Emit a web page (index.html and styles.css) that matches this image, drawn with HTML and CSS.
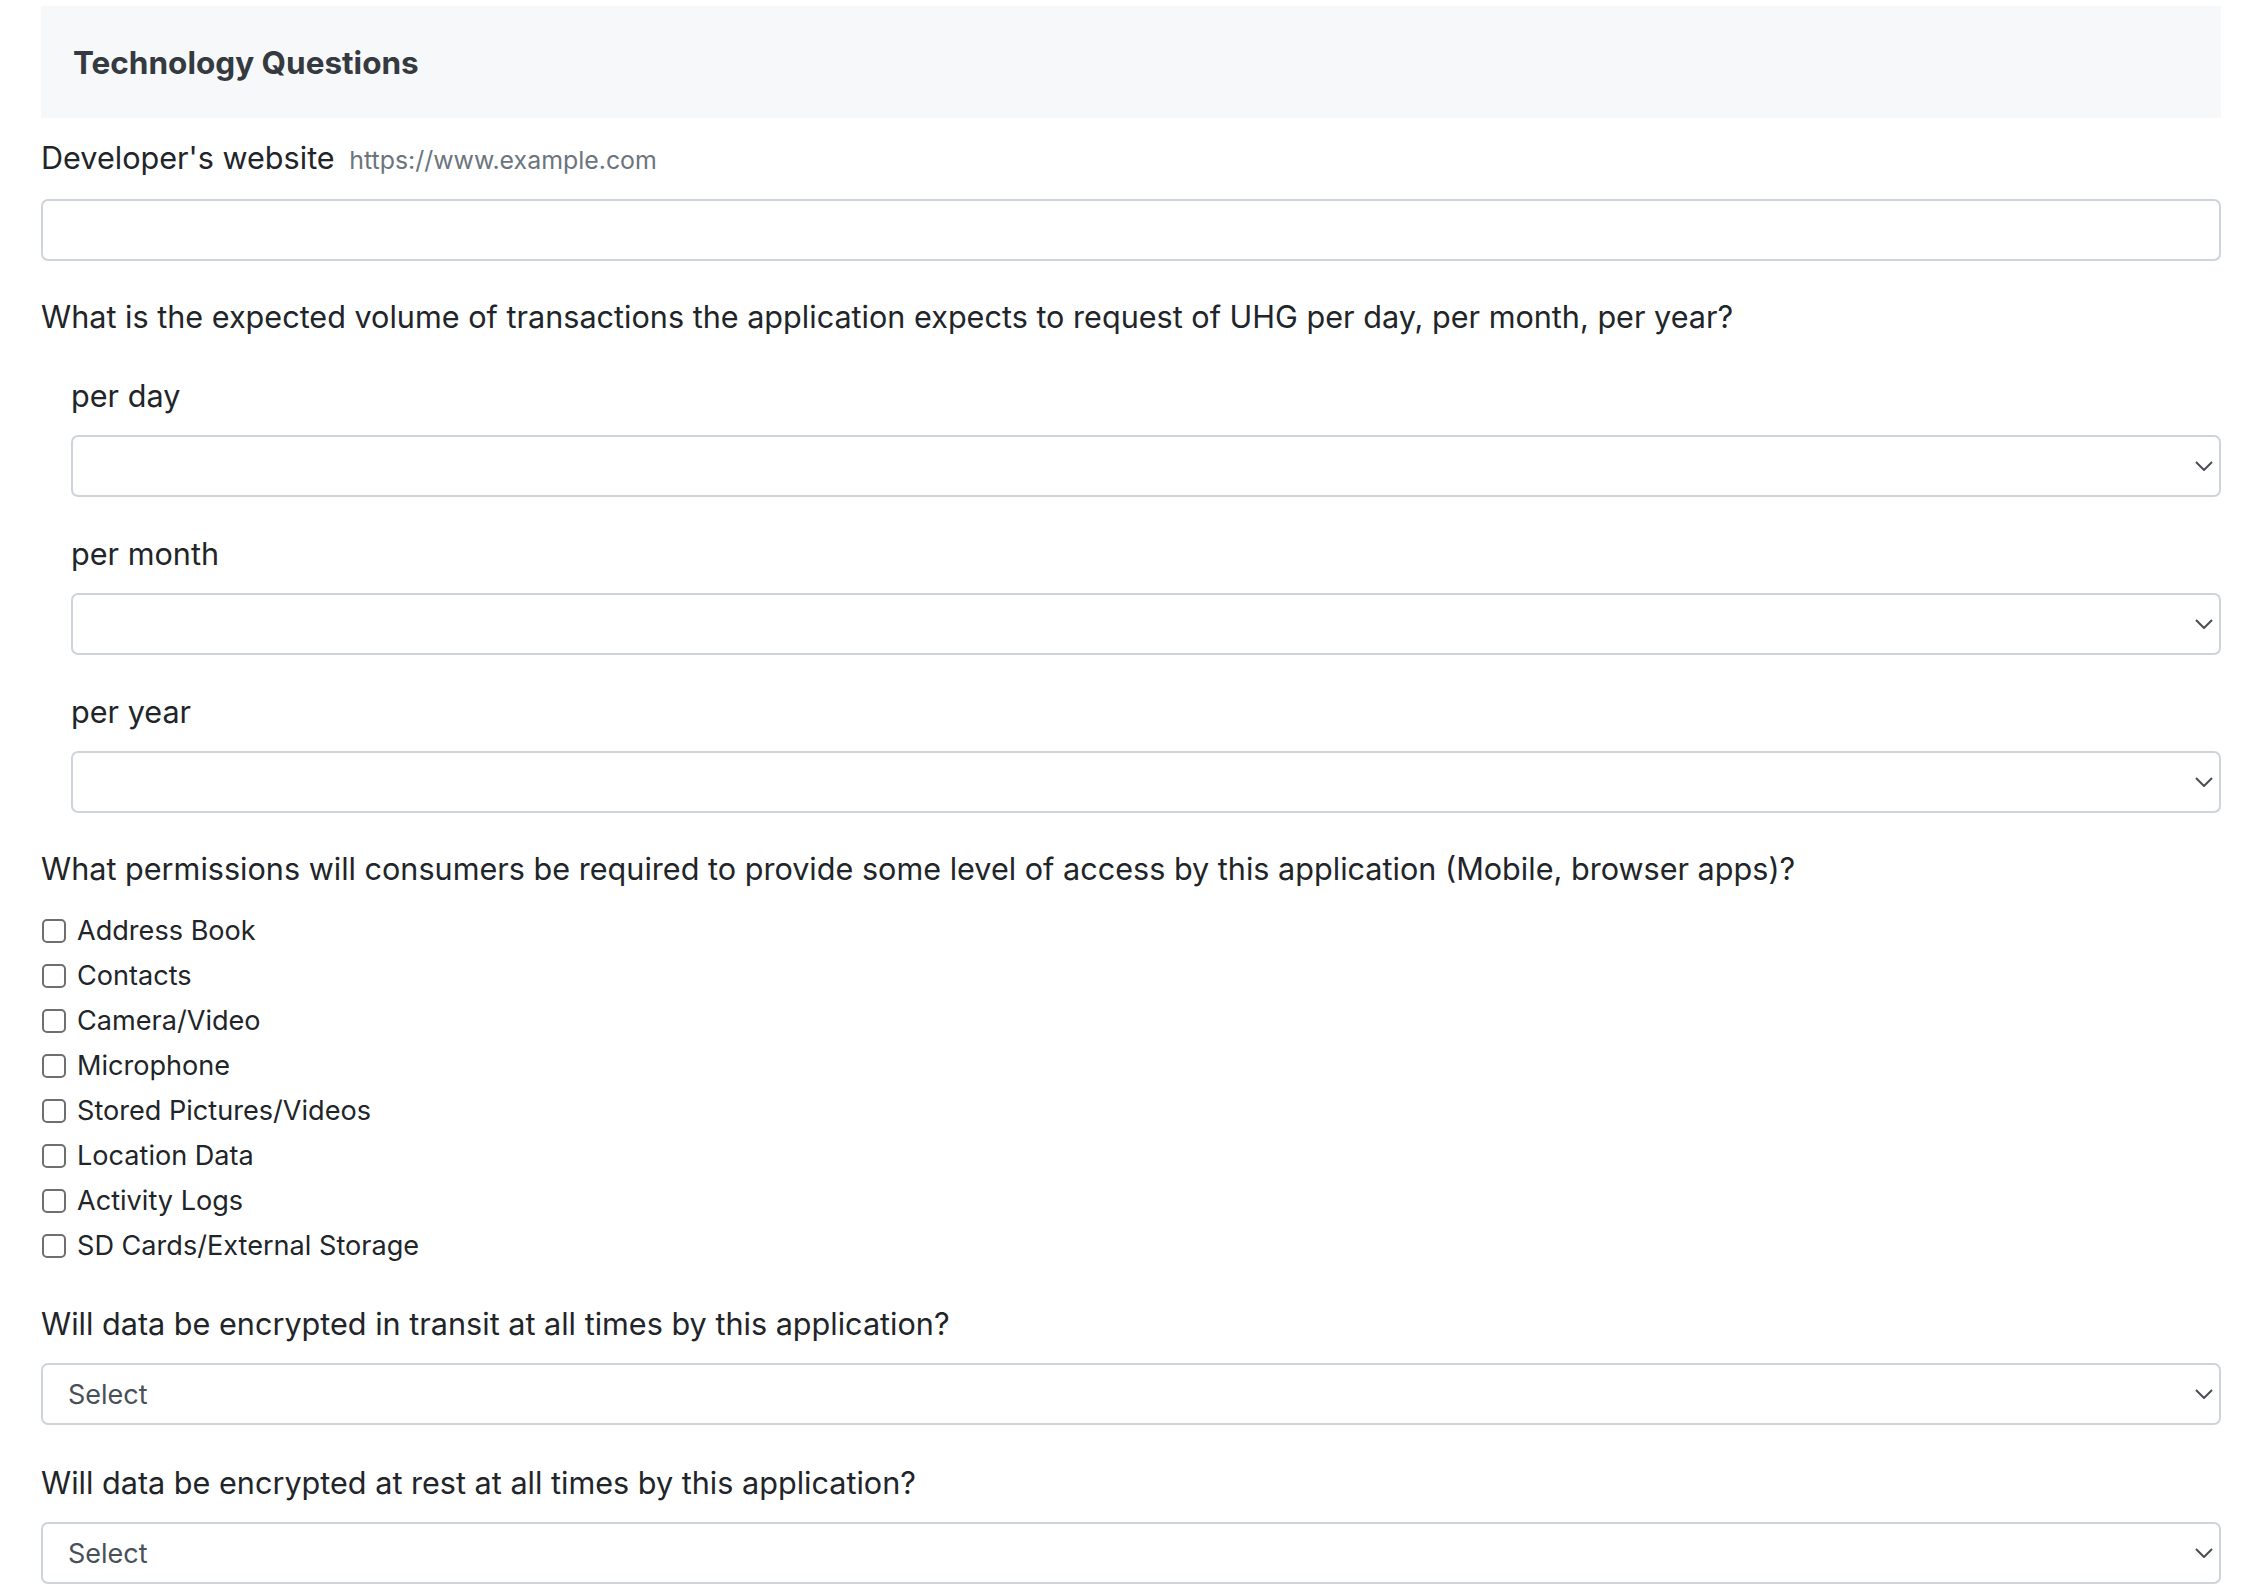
FILE: index.html
```html
<!DOCTYPE html>
<html lang="en">
<head>
  <title>Technology Questions</title>
  <link rel="stylesheet" href="styles.css">
</head>
<body>
  <div class="section">
    <div class="section-header">
      <h5>Technology Questions</h5>
    </div>

    <div class="form-body">
      <div class="form-group">
        <label class="field-label">Developer's website <small class="hint">https://www.example.com</small></label>
        <input class="form-control" type="text">
      </div>

      <div class="form-group">
        <label class="field-label">What is the expected volume of transactions the application expects to request of UHG per day, per month, per year?</label>
        <div class="sub-fields">
          <div class="sub-group">
            <label class="field-label">per day</label>
            <div class="select-wrap">
              <select class="form-control"><option></option></select>
              <svg class="chevron" width="18" height="10" viewBox="0 0 18 10"><polyline points="1,1 9,9 17,1" fill="none" stroke="#4a4d52" stroke-width="2"/></svg>
            </div>
          </div>
          <div class="sub-group">
            <label class="field-label">per month</label>
            <div class="select-wrap">
              <select class="form-control"><option></option></select>
              <svg class="chevron" width="18" height="10" viewBox="0 0 18 10"><polyline points="1,1 9,9 17,1" fill="none" stroke="#4a4d52" stroke-width="2"/></svg>
            </div>
          </div>
          <div class="sub-group">
            <label class="field-label">per year</label>
            <div class="select-wrap">
              <select class="form-control"><option></option></select>
              <svg class="chevron" width="18" height="10" viewBox="0 0 18 10"><polyline points="1,1 9,9 17,1" fill="none" stroke="#4a4d52" stroke-width="2"/></svg>
            </div>
          </div>
        </div>
      </div>

      <div class="form-group">
        <label class="field-label">What permissions will consumers be required to provide some level of access by this application (Mobile, browser apps)?</label>
        <div class="check-list">
          <label class="check"><input type="checkbox"> Address Book</label>
          <label class="check"><input type="checkbox"> Contacts</label>
          <label class="check"><input type="checkbox"> Camera/Video</label>
          <label class="check"><input type="checkbox"> Microphone</label>
          <label class="check"><input type="checkbox"> Stored Pictures/Videos</label>
          <label class="check"><input type="checkbox"> Location Data</label>
          <label class="check"><input type="checkbox"> Activity Logs</label>
          <label class="check"><input type="checkbox"> SD Cards/External Storage</label>
        </div>
      </div>

      <div class="form-group wide">
        <label class="field-label">Will data be encrypted in transit at all times by this application?</label>
        <div class="select-wrap">
          <select class="form-control"><option>Select</option></select>
          <svg class="chevron" width="18" height="10" viewBox="0 0 18 10"><polyline points="1,1 9,9 17,1" fill="none" stroke="#4a4d52" stroke-width="2"/></svg>
        </div>
      </div>

      <div class="form-group">
        <label class="field-label">Will data be encrypted at rest at all times by this application?</label>
        <div class="select-wrap">
          <select class="form-control"><option>Select</option></select>
          <svg class="chevron" width="18" height="10" viewBox="0 0 18 10"><polyline points="1,1 9,9 17,1" fill="none" stroke="#4a4d52" stroke-width="2"/></svg>
        </div>
      </div>
    </div>
  </div>
</body>
</html>
```

FILE: styles.css
```css
* {
  box-sizing: border-box;
}

body {
  margin: 0;
  padding: 6px 33px 0 41px;
  font-family: Inter, 'Noto Sans', sans-serif;
  font-size: 30.6px;
  color: #212529;
  background: #fff;
}

.section-header {
  height: 112px;
  display: flex;
  align-items: center;
  padding: 0 32px;
  background: #f7f8fa;
}

.section-header h5 {
  margin: 0;
  font-size: 31.5px;
  font-weight: 700;
  color: #343a40;
}

.form-body {
  padding-top: 19px;
}

.form-group {
  margin-bottom: 35px;
}

.form-group.wide {
  margin-bottom: 37px;
}

.field-label {
  display: block;
  line-height: 42px;
  margin-bottom: 18px;
}

.hint {
  margin-left: 6px;
  font-size: 24.9px;
  color: #6c757d;
}

.form-control {
  display: block;
  width: 100%;
  height: 62px;
  padding: 0 36px 0 25px;
  font-family: inherit;
  font-size: 27px;
  color: #495057;
  background: #fff;
  border: 2px solid #ced4da;
  border-radius: 7px;
  appearance: none;
  -webkit-appearance: none;
}

.select-wrap {
  position: relative;
}

.chevron {
  position: absolute;
  right: 8px;
  top: 26px;
}

.sub-fields {
  padding: 19px 0 0 30px;
}

.sub-group {
  margin-bottom: 36px;
}

.sub-group:last-child {
  margin-bottom: 0;
}

.check-list {
  display: flex;
  flex-direction: column;
}

.check {
  display: flex;
  align-items: center;
  gap: 11px;
  height: 45px;
  font-size: 27.1px;
}

.check input {
  appearance: none;
  -webkit-appearance: none;
  width: 24px;
  height: 24px;
  margin: 0 0 0 1px;
  border: 2px solid #6f6f6f;
  border-radius: 5px;
  background: #fff;
}
```
